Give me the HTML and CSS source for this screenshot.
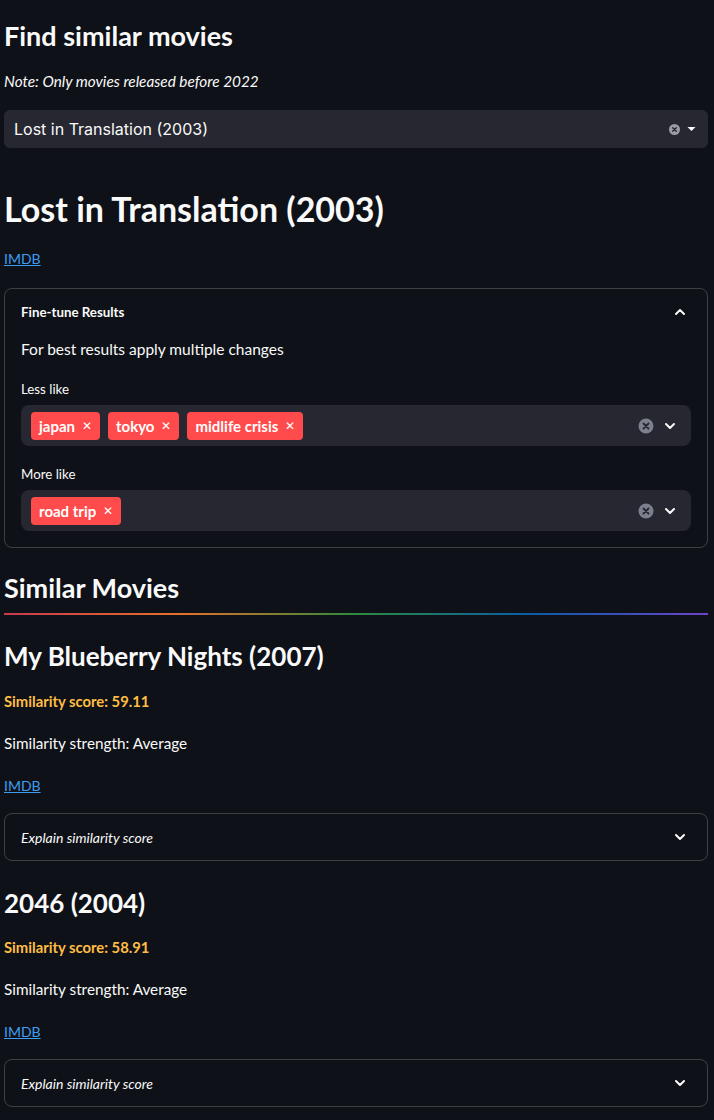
FILE: index.html
```html
<!DOCTYPE html>
<html lang="en">
<head>
    <meta charset="UTF-8">
    <meta name="viewport" content="width=device-width, initial-scale=1.0">
    <title>Find similar movies</title>
    <link rel="stylesheet" href="styles.css">
</head>
<body>
    <div class="main">
        <h3 class="title">Find similar movies</h3>
        <p class="note"><em>Note: Only movies released before 2022</em></p>

        <div class="select">
            <span class="select-value">Lost in Translation (2003)</span>
            <span class="select-icons">
                <svg class="clear-sm" width="11" height="11" viewBox="0 0 12 12"><circle cx="6" cy="6" r="6" fill="#9a9ba3"/><path d="M4 4l4 4M8 4l-4 4" stroke="#262730" stroke-width="1.5" stroke-linecap="round"/></svg>
                <svg width="9" height="6" viewBox="0 0 9 6"><path d="M0.5 1h8L4.5 5z" fill="#fafafa"/></svg>
            </span>
        </div>

        <h1 class="movie-title">Lost in Translation (2003)</h1>
        <p class="link-row"><a href="#">IMDB</a></p>

        <div class="expander open">
            <div class="exp-head">
                <span class="exp-label bold">Fine-tune Results</span>
                <svg class="chev" width="12" height="8" viewBox="0 0 12 8"><path d="M2 6l4-4 4 4" fill="none" stroke="#fafafa" stroke-width="2" stroke-linecap="round" stroke-linejoin="round"/></svg>
            </div>
            <div class="exp-body">
                <p class="hint">For best results apply multiple changes</p>

                <label class="field-label">Less like</label>
                <div class="multi">
                    <div class="tags">
                        <span class="tag">japan <span class="x">✕</span></span>
                        <span class="tag">tokyo <span class="x">✕</span></span>
                        <span class="tag">midlife crisis <span class="x">✕</span></span>
                    </div>
                    <div class="multi-icons">
                        <svg width="16" height="16" viewBox="0 0 16 16"><circle cx="8" cy="8" r="7.5" fill="#7c7f8e"/><path d="M5.5 5.5l5 5M10.5 5.5l-5 5" stroke="#262730" stroke-width="1.8" stroke-linecap="round"/></svg>
                        <svg width="12" height="8" viewBox="0 0 12 8"><path d="M2 2l4 4 4-4" fill="none" stroke="#fafafa" stroke-width="2" stroke-linecap="round" stroke-linejoin="round"/></svg>
                    </div>
                </div>

                <label class="field-label">More like</label>
                <div class="multi">
                    <div class="tags">
                        <span class="tag">road trip <span class="x">✕</span></span>
                    </div>
                    <div class="multi-icons">
                        <svg width="16" height="16" viewBox="0 0 16 16"><circle cx="8" cy="8" r="7.5" fill="#7c7f8e"/><path d="M5.5 5.5l5 5M10.5 5.5l-5 5" stroke="#262730" stroke-width="1.8" stroke-linecap="round"/></svg>
                        <svg width="12" height="8" viewBox="0 0 12 8"><path d="M2 2l4 4 4-4" fill="none" stroke="#fafafa" stroke-width="2" stroke-linecap="round" stroke-linejoin="round"/></svg>
                    </div>
                </div>
            </div>
        </div>

        <h3 class="section">Similar Movies</h3>
        <hr class="rainbow">

        <div class="result">
            <h2 class="result-title">My Blueberry Nights (2007)</h2>
            <p class="score">Similarity score: 59.11</p>
            <p class="strength">Similarity strength: Average</p>
            <p class="link-row"><a href="#">IMDB</a></p>
            <div class="expander closed">
                <div class="exp-head">
                    <span class="exp-label"><em>Explain similarity score</em></span>
                    <svg class="chev" width="12" height="8" viewBox="0 0 12 8"><path d="M2 2l4 4 4-4" fill="none" stroke="#fafafa" stroke-width="2" stroke-linecap="round" stroke-linejoin="round"/></svg>
                </div>
            </div>
        </div>

        <div class="result">
            <h2 class="result-title">2046 (2004)</h2>
            <p class="score">Similarity score: 58.91</p>
            <p class="strength">Similarity strength: Average</p>
            <p class="link-row"><a href="#">IMDB</a></p>
            <div class="expander closed">
                <div class="exp-head">
                    <span class="exp-label"><em>Explain similarity score</em></span>
                    <svg class="chev" width="12" height="8" viewBox="0 0 12 8"><path d="M2 2l4 4 4-4" fill="none" stroke="#fafafa" stroke-width="2" stroke-linecap="round" stroke-linejoin="round"/></svg>
                </div>
            </div>
        </div>
    </div>
</body>
</html>
```

FILE: styles.css
```css
body { margin: 0; background-color: #0e1117; color: #fafafa; font-family: Lato, "Noto Sans", sans-serif; }
.main { padding: 0 6px 0 4px; }
p { margin: 0; }
h1, h2, h3 { margin: 0; font-weight: 700; }
a { color: #3d9df3; text-decoration: underline; }

.title { font-size: 27px; line-height: 36px; padding-top: 18px; }
.note { font-size: 15.3px; line-height: 22px; margin-top: 16px; }
.select { margin-top: 18px; height: 38px; background: #262730; border-radius: 6px; display: flex; align-items: center; justify-content: space-between; padding: 0 12px 0 10px; }
.select-value { font-family: Inter, sans-serif; font-size: 16px; }
.select-icons { display: flex; align-items: center; gap: 7px; }

.movie-title { font-size: 34px; line-height: 44px; margin-top: 39px; }
.link-row { font-size: 14px; line-height: 20px; margin-top: 18px; }

.expander { border: 1px solid rgba(250, 250, 250, 0.2); border-radius: 8px; }
.expander.open { margin-top: 19px; padding-bottom: 16px; }
.exp-head { display: flex; align-items: center; justify-content: space-between; padding: 0 21px 0 16px; height: 45px; }
.exp-label { font-size: 14px; }
.exp-label.bold { font-size: 13.3px; font-weight: 700; }
.exp-body { padding: 0 16px; }
.hint { font-size: 15.5px; line-height: 22px; margin-top: 4px; }
.field-label { display: block; font-size: 13.3px; line-height: 18px; margin-top: 20px; margin-bottom: 7px; }
.multi { background: #262730; border-radius: 8px; height: 41px; display: flex; align-items: center; justify-content: space-between; padding: 0 15px 0 10px; }
.multi + .field-label { margin-top: 19px; }
.tags { display: flex; gap: 8px; }
.tag { background: #ff4b4b; color: #fff; font-size: 15px; font-weight: 700; border-radius: 4px; height: 28px; display: flex; align-items: center; padding: 0 8px 0 8px; gap: 7px; }
.tag .x { font-size: 12px; font-weight: 400; }
.multi-icons { display: flex; align-items: center; gap: 10px; }

.section { font-size: 27px; line-height: 36px; margin-top: 22px; }
.rainbow { border: none; height: 2px; margin: 7px 0 0; background: linear-gradient(to right, #c83a4f, #e5722a 25%, #2e8a3e 50%, #0a5ca8 75%, #6c44c9); }

.result-title { font-size: 26px; line-height: 36px; margin-top: 23px; }
.score { color: #ffbd45; font-weight: 700; font-size: 14.8px; line-height: 20px; margin-top: 17px; }
.strength { font-size: 15.3px; line-height: 22px; margin-top: 21px; }
.result .link-row { margin-top: 22px; }
.expander.closed { margin-top: 17px; }
.expander.closed .exp-head { height: 46px; }
.result + .result .result-title { margin-top: 24px; }
.result + .result .score { margin-top: 16px; }
```
